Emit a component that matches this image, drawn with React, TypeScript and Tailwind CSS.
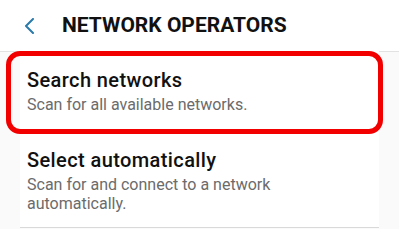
import React from 'react';

const font = { fontFamily: 'Roboto, "Noto Sans", sans-serif' };

const App: React.FC = () => {
  return (
    <div className="w-[399px] h-[229px] overflow-hidden bg-[#fafafa]" style={font}>
      {/* Header */}
      <div className="h-[52px] bg-white border-b border-[#e2e2e2] flex items-start">
        <svg className="mt-[18px] ml-[23px] w-[13px] h-[16px]" viewBox="0 0 13 16" fill="none">
          <polyline points="10,1 3,8 10,15" stroke="#2a7aab" strokeWidth="2" strokeLinecap="round" strokeLinejoin="round" />
        </svg>
        <h1 className="ml-[26px] mt-[13px] text-[21px] leading-[25px] font-bold text-[#111]">
          NETWORK OPERATORS
        </h1>
      </div>

      {/* List card */}
      <div className="mx-5 bg-white -mt-px">
        <div className="relative pl-[7px] pt-[18px] pb-[19px]">
          <div className="text-[20px] leading-[23px] font-medium text-[#111] tracking-[0.4px]">Search networks</div>
          <div className="mt-[3px] text-[16px] leading-[19px] text-[#6b6b6b]">Scan for all available networks.</div>
          <div className="absolute -left-[14px] -right-[4px] top-0 -bottom-[1px] border-[5px] border-[#f20000] rounded-[14px] pointer-events-none" />
        </div>
        <div className="pl-[7px] pt-[16px] pb-[14px] border-b border-[#d9d9d9]">
          <div className="text-[20px] leading-[23px] font-medium text-[#111] tracking-[0.4px]">Select automatically</div>
          <div className="mt-[3px] text-[16px] leading-[19px] text-[#6b6b6b] w-[270px]">
            Scan for and connect to a network automatically.
          </div>
        </div>
      </div>
    </div>
  );
};

export default App;
